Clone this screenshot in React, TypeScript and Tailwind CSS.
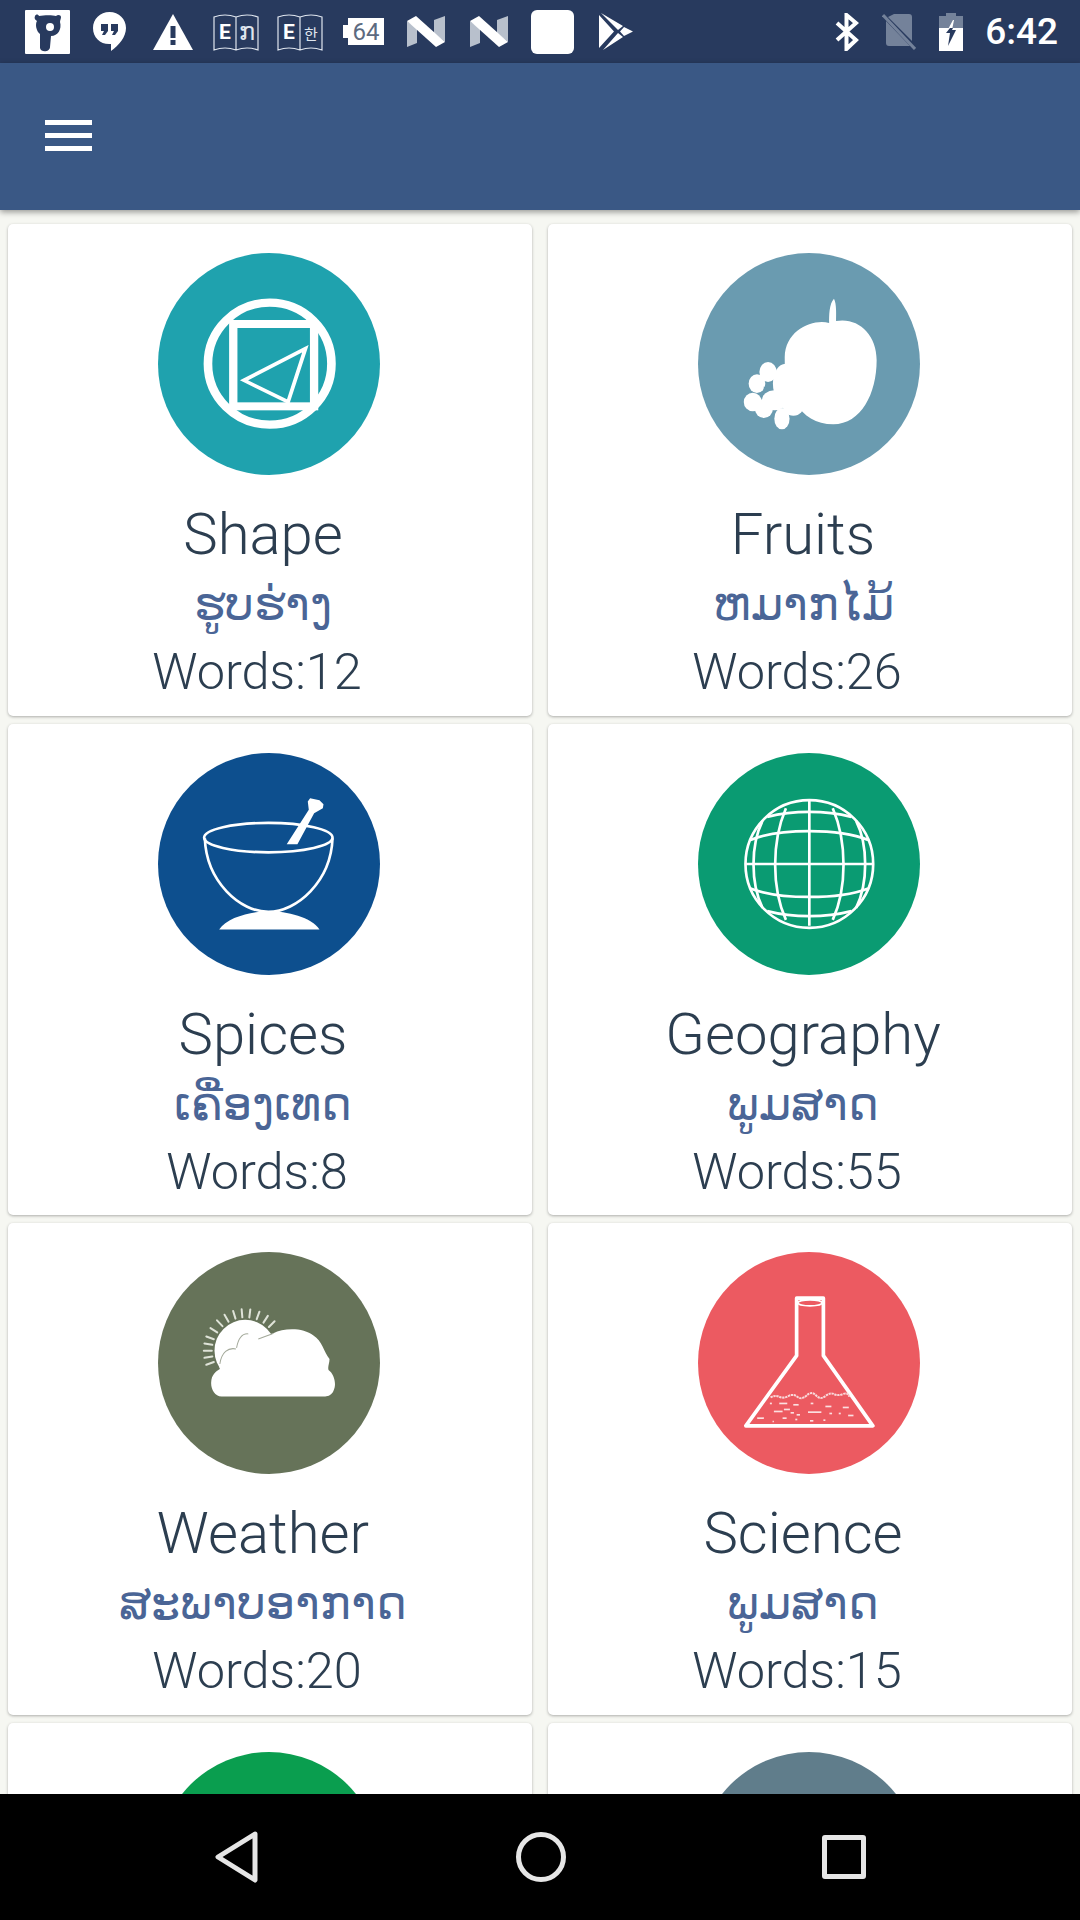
import React from "react";

const W = "#ffffff";

function ShapeIcon() {
  return (
    <svg viewBox="460 98 640 666" preserveAspectRatio="none" className="w-full h-full">
      <ellipse cx="782" cy="430" rx="178" ry="183" fill="none" stroke={W} strokeWidth="25" />
      <rect x="677" y="311" width="233" height="247" fill="none" stroke={W} strokeWidth="24" />
      <path d="M885 385 L708 480 L835 545 Z" fill="none" stroke={W} strokeWidth="11" />
    </svg>
  );
}

function FruitIcon() {
  return (
    <svg viewBox="460 98 640 666" preserveAspectRatio="none" className="w-full h-full">
      <path d="M838 308 C838 285 838 250 852 235 C860 250 858 285 858 302 C920 290 975 340 975 420 C975 520 930 612 850 612 C750 612 708 510 710 410 C712 330 790 295 838 308 Z" fill={W} />
      <g fill={W}>
        <ellipse cx="662" cy="455" rx="25" ry="30" />
        <ellipse cx="630" cy="490" rx="24" ry="28" />
        <ellipse cx="618" cy="545" rx="26" ry="28" />
        <ellipse cx="650" cy="565" rx="26" ry="28" />
        <ellipse cx="702" cy="595" rx="22" ry="32" />
        <ellipse cx="735" cy="550" rx="32" ry="36" />
        <ellipse cx="712" cy="490" rx="36" ry="60" />
        <ellipse cx="680" cy="540" rx="36" ry="30" />
      </g>
      <path d="M650 498 L665 510 L648 522 Z" fill="#6a9bb0" />
    </svg>
  );
}

function SpiceIcon() {
  return (
    <svg viewBox="55 35 664 664" className="w-full h-full">
      <path d="M440 308 L472 308 L522 215 L548 200 L550 188 L538 176 L510 170 L503 180 L506 205 Z" fill={W} />
      <ellipse cx="385" cy="288" rx="192" ry="44" fill="none" stroke={W} strokeWidth="8" />
      <path d="M195 290 C200 420 300 510 385 510 C470 510 572 420 577 290" fill="none" stroke={W} strokeWidth="8" />
      <path d="M238 563 C260 525 340 508 385 508 C440 508 515 525 538 563 Z" fill={W} />
    </svg>
  );
}

function GlobeIcon() {
  return (
    <svg viewBox="55 35 664 664" className="w-full h-full">
      <g fill="none" stroke={W} strokeWidth="8">
        <circle cx="388" cy="367" r="191" />
        <path d="M196 367 H580 M388 178 V552" />
        <path d="M318 200 C275 300 275 440 318 534 M458 200 C501 300 501 440 458 534" />
        <path d="M248 238 C212 310 212 425 248 498 M528 238 C564 310 564 425 528 498" />
        <path d="M212 295 C300 260 476 260 564 295 M212 440 C300 474 476 474 564 440" />
        <path d="M262 226 C340 206 436 206 514 226 M262 508 C340 528 436 528 514 508" />
      </g>
    </svg>
  );
}

function WeatherIcon() {
  const angles = [-200, -190, -180, -170, -160, -147, -133, -120, -107, -95, -83, -70, -57, -45];
  return (
    <svg viewBox="55 35 664 664" className="w-full h-full">
      <g stroke="#dfe3d8" strokeWidth="6" strokeLinecap="round">
        {angles.map((a) => {
          const r = (a * Math.PI) / 180;
          const cx = 316;
          const cy = 330;
          return (
            <line
              key={a}
              x1={cx + 100 * Math.cos(r)}
              y1={cy + 100 * Math.sin(r)}
              x2={cx + 124 * Math.cos(r)}
              y2={cy + 124 * Math.sin(r)}
            />
          );
        })}
      </g>
      <circle cx="316" cy="330" r="92" fill={W} />
      <path d="M245 467 C225 467 213 445 214 425 C215 402 228 392 240 385 C232 350 255 325 285 325 C290 295 320 270 350 295 C370 290 385 285 400 278 C430 262 490 260 520 285 C545 300 552 335 568 355 C568 368 562 378 565 388 C582 400 590 430 580 450 C575 462 565 467 555 467 Z" fill={W} />
      <g fill="none" stroke="#a3a99a" strokeWidth="3">
        <path d="M240 370 C245 335 265 320 288 325" />
        <path d="M290 322 C295 295 305 278 325 280" />
        <path d="M355 295 C370 290 385 285 400 278" />
      </g>
    </svg>
  );
}

function FlaskIcon() {
  const bits = [
    [270, 488, 6], [298, 488, 24], [340, 492, 16], [392, 488, 8], [436, 497, 18], [488, 500, 18],
    [282, 512, 26], [312, 506, 18], [332, 516, 10], [350, 522, 10], [384, 514, 40], [448, 518, 8],
    [476, 518, 6], [504, 524, 16], [232, 532, 20], [308, 532, 12], [346, 536, 6], [390, 540, 10], [430, 538, 6], [278, 542, 4],
  ];
  return (
    <svg viewBox="55 35 664 664" className="w-full h-full">
      <path d="M350 173 H430 V345 L578 555 H198 L350 345 Z" fill="none" stroke={W} strokeWidth="11" strokeLinejoin="round" />
      <ellipse cx="390" cy="187" rx="36" ry="9" fill="none" stroke={W} strokeWidth="5" />
      <path d="M272 470 Q285 462 298 468 T325 466 T352 468 T380 464 T408 464 T436 466 T462 460 T488 460 T508 468" fill="none" stroke="#f9d8da" strokeWidth="6" strokeDasharray="7 2" />
      <g stroke="#fbdfe0" strokeWidth="5">
        {bits.map(([x, y, l], i) => (
          <line key={i} x1={x} y1={y} x2={x + l} y2={y} />
        ))}
      </g>
    </svg>
  );
}

function Card({ color, icon, title, lao, words }: { color: string; icon?: React.ReactNode; title?: string; lao?: string; words?: string }) {
  return (
    <div className="h-[491.67px] bg-white rounded-[5px] shadow-[0_1px_3px_rgba(0,0,0,0.3)] flex flex-col items-center pt-[29px]">
      <div className="w-[222px] h-[222px] shrink-0 rounded-full mr-[2px]" style={{ backgroundColor: color }}>
        {icon}
      </div>
      {title && (
        <>
          <div className="mt-[23px] pr-[14px] h-[72px] leading-[72px] text-[58px] font-light text-[#2c3e50]">{title}</div>
          <div className="pr-[14px] h-[68px] leading-[68px] text-[46px] font-extralight text-[#4a6596]">{lao}</div>
          <div className="pr-[26px] h-[68px] leading-[68px] text-[50.5px] font-light text-[#2c3e50]">{words}</div>
        </>
      )}
    </div>
  );
}

export default function App() {
  return (
    <div
      className="w-[1080px] h-[1920px] flex flex-col overflow-hidden bg-[#f6f7f2]"
      style={{ fontFamily: 'Roboto, "DejaVu Sans", sans-serif' }}
    >
      <div className="h-[63px] shrink-0 bg-[#283a5e] flex items-center justify-between">
        <div className="flex items-center">
          <svg viewBox="0 0 45 44" className="ml-[25px] w-[45px] h-[44px]">
            <rect width="45" height="44" rx="1" fill={W} />
            <path d="M10 6 C11 4 13 4 14 6 C19 5 28 5 31 6 C33 4 36 5 36 7 C36 9 35 10 35 12 C37 19 33 26 26 26 L25 37 C25 42 16 43 15 38 L15 24 C11 21 10 14 12 11 C10 10 9 8 10 6 Z" fill="#283a5e" />
            <circle cx="25" cy="17" r="4" fill={W} />
          </svg>
          <svg viewBox="0 0 33 39" className="ml-[23px] w-[33px] h-[39px]">
            <path d="M16.5 0 C26 0 33 7 33 16 C33 25 26 33 18 39 L18 32 C8 33 0 26 0 16 C0 7 7 0 16.5 0 Z" fill={W} />
            <path d="M8 12 H15 V19 L12 23 H9 L11 19 H8 Z M18 12 H25 V19 L22 23 H19 L21 19 H18 Z" fill="#283a5e" />
          </svg>
          <svg viewBox="0 0 40 36" className="ml-[27px] w-[40px] h-[36px]">
            <path d="M20 0 L40 36 H0 Z" fill={W} />
            <rect x="17.5" y="12" width="5" height="12" fill="#283a5e" />
            <rect x="17.5" y="26" width="5" height="5" fill="#283a5e" />
          </svg>
          <Book ch="ກ" ml="ml-[20px]" size={24} />
          <Book ch="한" ml="ml-[18px]" size={15} />
          <svg viewBox="0 0 41 27" className="ml-[20px] w-[41px] h-[27px]">
            <path d="M5 0 H41 V27 H5 V20 H0 V7 H5 Z" fill={W} />
            <text x="23" y="22" textAnchor="middle" fontSize="24" fill="#5c6a80" fontFamily="Roboto">64</text>
          </svg>
          <NIcon ml="ml-[23px]" />
          <NIcon ml="ml-[25px]" />
          <div className="ml-[23px] w-[43px] h-[44px] bg-white rounded-[6px]" />
          <svg viewBox="0 0 34 37" className="ml-[25px] w-[34px] h-[37px]">
            <path d="M0 2 L15 18.5 L0 35 Z M2 0 L24 13 L19 17 Z M4 37 L24 24 L19 20 Z M25 14 L34 18.5 L25 23 L21 18.5 Z" fill={W} />
          </svg>
        </div>
        <div className="flex items-center pr-[22px]">
          <svg viewBox="0 0 24 38" className="w-[24px] h-[38px]">
            <path d="M2 10 L21 27 L11.5 36 V2 L21 10 L2 27" fill="none" stroke={W} strokeWidth="4" />
          </svg>
          <svg viewBox="0 0 34 37" className="ml-[23px] w-[34px] h-[37px]">
            <path d="M12 1 H27 C29 1 30 2 30 4 V28 L6 4 Z M4 8 L28 33 H7 C5 33 4 32 4 30 Z" fill="#74829a" />
            <path d="M1 2 L33 36" stroke="#74829a" strokeWidth="3" />
          </svg>
          <svg viewBox="0 0 24 38" className="ml-[23px] w-[24px] h-[38px]">
            <path d="M7 0 H17 V3 H24 V15 H0 V3 H7 Z" fill="#74829a" />
            <rect y="15" width="24" height="23" fill={W} />
            <path d="M14 7 L7 20 H11 L9 33 L17 17 H13 L15 7 Z" fill={W} />
            <path d="M11 15 L7 20 H11 L9 33 L17 17 H13 L14 15 Z" fill="#283a5e" />
          </svg>
          <div className="ml-[22px] text-[37px] leading-none font-medium text-white">6:42</div>
        </div>
      </div>

      <div className="h-[147px] shrink-0 bg-[#3a5885] relative z-10 shadow-[0_2px_6px_rgba(0,0,0,0.4)] flex items-center pl-[45px]">
        <div className="w-[47px] flex flex-col gap-[8px] -mt-[2px]">
          <div className="h-[5px] bg-white" />
          <div className="h-[5px] bg-white" />
          <div className="h-[5px] bg-white" />
        </div>
      </div>

      <div className="flex-1 overflow-hidden px-[8px] pt-[14px] grid grid-cols-2 gap-x-[16px] gap-y-[8px] content-start">
        <Card color="#1fa2ae" icon={<ShapeIcon />} title="Shape" lao="ຮູບຮ່າງ" words="Words:12" />
        <Card color="#6a9bb0" icon={<FruitIcon />} title="Fruits" lao="ຫມາກໄມ້" words="Words:26" />
        <Card color="#0d4f8e" icon={<SpiceIcon />} title="Spices" lao="ເຄື່ອງເທດ" words="Words:8" />
        <Card color="#0a9b72" icon={<GlobeIcon />} title="Geography" lao="ພູມສາດ" words="Words:55" />
        <Card color="#667359" icon={<WeatherIcon />} title="Weather" lao="ສະພາບອາກາດ" words="Words:20" />
        <Card color="#ec5a61" icon={<FlaskIcon />} title="Science" lao="ພູມສາດ" words="Words:15" />
        <Card color="#0a9e4f" />
        <Card color="#607d8b" />
      </div>

      <div className="h-[126px] shrink-0 bg-black flex items-center justify-center relative z-10">
        <svg viewBox="0 0 46 52" className="w-[46px] h-[52px] mr-[255px]">
          <path d="M41 3 L4 26 L41 49 Z" fill="none" stroke="#e6e6e6" strokeWidth="5" strokeLinejoin="round" />
        </svg>
        <svg viewBox="0 0 52 52" className="w-[52px] h-[52px] mr-[255px]">
          <circle cx="26" cy="26" r="22.5" fill="none" stroke="#e6e6e6" strokeWidth="5" />
        </svg>
        <div className="w-[44px] h-[44px] rounded-[3px] border-[5px] border-[#e6e6e6]" />
      </div>
    </div>
  );
}

function Book({ ch, ml, size }: { ch: string; ml: string; size: number }) {
  return (
    <svg viewBox="0 0 46 38" className={`${ml} w-[46px] h-[38px]`}>
      <path d="M1 4 Q12 0 23 4 Q34 0 45 4 V37 Q34 33 23 37 Q12 33 1 37 Z M23 4 V37" fill="none" stroke="#dfe5ee" strokeWidth="1.2" />
      <text x="12" y="26" textAnchor="middle" fontSize="21" fontWeight="700" fill={W} fontFamily="Roboto">E</text>
      <text x="34" y="27" textAnchor="middle" fontSize={size} fill="#dfe5ee" fontFamily="'DejaVu Sans','Noto Sans CJK KR',sans-serif">{ch}</text>
    </svg>
  );
}

function NIcon({ ml }: { ml: string }) {
  return (
    <svg viewBox="0 0 38 31" className={`${ml} w-[38px] h-[31px]`}>
      <path d="M0 5 L10 12 V27 L0 31 Z M38 0 L27 4 V17 L38 26 Z" fill="#b8c0cc" />
      <path d="M0 5 L9 0 L38 26 L29 31 Z" fill={W} />
    </svg>
  );
}
